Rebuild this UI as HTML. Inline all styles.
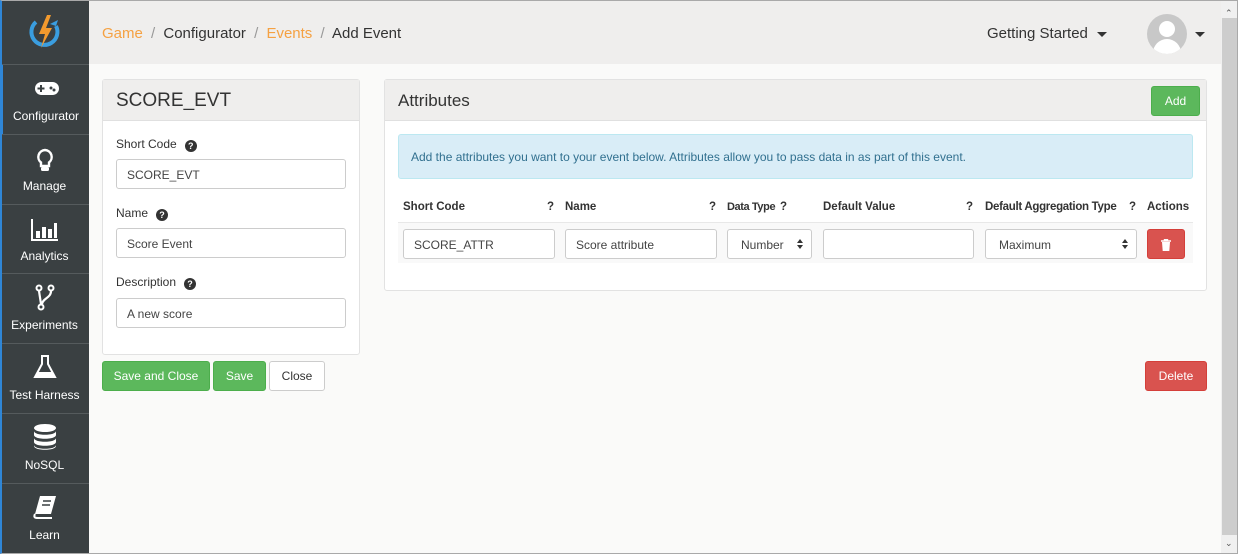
<!DOCTYPE html>
<html><head><style>
*{box-sizing:border-box;margin:0;padding:0}
body{width:1238px;height:554px;overflow:hidden;background:#fafaf9;font-family:"Liberation Sans",sans-serif;color:#333;position:relative;font-size:12px}
.a{position:absolute}
#win{position:absolute;left:0;top:0;width:1238px;height:554px;border:1px solid #a9a9a9;border-left:2px solid #2f86d6;pointer-events:none}
.side{left:0;top:0;width:89px;height:554px;background:#3a4042}
.item{position:absolute;left:0;width:89px;height:70px;border-top:1px solid #555b5d;color:#fff;text-align:center;font-size:12px}
.item span{position:absolute;left:0;right:0;top:44px}
.item svg{position:absolute;left:33px;top:12px}
.hdr{left:89px;top:0;width:1132px;height:64px;background:#efeeed}
.panel{background:#fff;border:1px solid #e2e2e2;border-radius:3px}
.ph{position:absolute;left:0;top:0;right:0;height:41px;background:#efeeed;border-bottom:1px solid #e0e0e0}
.inp{position:absolute;height:30px;border:1px solid #ccc;border-radius:3px;background:#fff;font-size:12px;padding:8px 10px;color:#444;white-space:nowrap}
.lbl{position:absolute;font-size:12px;color:#333}
.q{display:inline-block;width:12px;height:12px;border-radius:6px;background:#333;color:#fff;font-size:9px;font-weight:bold;text-align:center;line-height:12px;margin-left:8px;vertical-align:-1px}
.btn{position:absolute;height:30px;border-radius:3px;font-size:12px;text-align:center;line-height:29px;color:#fff}
.g{background:#5cb85c;border:1px solid #4cae4c}
.r{background:#d9534f;border:1px solid #d43f3a}
.th{position:absolute;top:201px;font-size:11.5px;font-weight:bold;color:#333;white-space:nowrap}
.sel:after{content:"";position:absolute;right:8px;top:9px;border:3px solid transparent;border-bottom:4px solid #333;border-top:0}
.sel:before{content:"";position:absolute;right:8px;top:15px;border:3px solid transparent;border-top:4px solid #333;border-bottom:0}
</style></head><body>
<div class="a side">
 <svg class="a" style="left:26px;top:12px" width="38" height="40" viewBox="0 0 38 40"><path d="M10 10 A13 13 0 1 0 30 14" fill="none" stroke="#3a9ee0" stroke-width="4"/><path d="M30 14 l-6 -2 l8 -4z" fill="#3a9ee0"/><path d="M21 3 L13 22 L19 22 L15 36 L26 16 L20 16 L25 3z" fill="#f29a2e"/></svg>
 <div class="item" style="top:64px;border-left:3px solid #2f86d6"><svg width="26" height="20" viewBox="0 0 26 20" style="left:31px;top:14px"><rect x="1" y="3" width="24" height="13" rx="6.5" fill="#fff"/><path d="M7 6v7M3.5 9.5h7" stroke="#3a4042" stroke-width="2"/><circle cx="17" cy="9" r="1.5" fill="#3a4042"/><circle cx="20" cy="11" r="1.5" fill="#3a4042"/></svg><span style="top:44px">Configurator</span></div>
 <div class="item" style="top:134px"><svg width="22" height="26" viewBox="0 0 22 26" style="left:34px"><path d="M11 3a7 7 0 0 0-4 12.5V19h8v-3.5A7 7 0 0 0 11 3z" fill="none" stroke="#fff" stroke-width="2.4"/><rect x="7" y="20" width="8" height="4" rx="1.5" fill="#fff"/></svg><span>Manage</span></div>
 <div class="item" style="top:204px"><svg width="30" height="26" viewBox="0 0 30 26" style="left:30px"><path d="M2 2v21h26" fill="none" stroke="#fff" stroke-width="2"/><rect x="6" y="14" width="4" height="7" fill="#fff"/><rect x="12" y="10" width="4" height="11" fill="#fff"/><rect x="18" y="12" width="4" height="9" fill="#fff"/><rect x="24" y="6" width="3" height="15" fill="#fff"/></svg><span>Analytics</span></div>
 <div class="item" style="top:273px"><svg width="22" height="28" viewBox="0 0 22 28" style="left:34px;top:10px"><circle cx="5" cy="4" r="2.5" fill="none" stroke="#fff" stroke-width="2"/><circle cx="17" cy="4" r="2.5" fill="none" stroke="#fff" stroke-width="2"/><circle cx="7" cy="23" r="2.5" fill="none" stroke="#fff" stroke-width="2"/><path d="M5 7l2 13M17 7c0 7-8 7-9 13" fill="none" stroke="#fff" stroke-width="2.2"/></svg><span>Experiments</span></div>
 <div class="item" style="top:343px"><svg width="24" height="26" viewBox="0 0 24 26" style="left:33px;top:10px"><path d="M8 2h8M9 2v8L2 23h20L15 10V2" fill="none" stroke="#fff" stroke-width="2"/><path d="M5 18h14l3 5H2z" fill="#fff"/></svg><span>Test Harness</span></div>
 <div class="item" style="top:413px"><svg width="26" height="28" viewBox="0 0 26 28" style="left:32px;top:9px"><ellipse cx="13" cy="5" rx="11" ry="4" fill="#fff"/><path d="M2 8c0 5 22 5 22 0v4c0 5-22 5-22 0zM2 15c0 5 22 5 22 0v4c0 5-22 5-22 0zM2 22c0 5 22 5 22 0v1c0 5-22 5-22 0z" fill="#fff"/></svg><span>NoSQL</span></div>
 <div class="item" style="top:483px"><svg width="26" height="26" viewBox="0 0 26 26" style="left:32px;top:10px"><path d="M8 2h16l-5 18H3z" fill="#fff"/><path d="M3 20c-2 4 1 4 3 4h14" fill="none" stroke="#fff" stroke-width="2"/><path d="M11 7h8M10 11h8" stroke="#3a4042" stroke-width="1.6"/></svg><span>Learn</span></div>
</div>
<div class="a hdr">
 <div class="a" style="left:13px;top:25px;font-size:15px;color:#333;white-space:nowrap"><span style="color:#f5a142">Game</span> <span style="color:#999;margin:0 4px">/</span> Configurator <span style="color:#999;margin:0 4px">/</span> <span style="color:#f5a142">Events</span> <span style="color:#999;margin:0 4px">/</span> Add Event</div>
 <div class="a" style="left:898px;top:25px;font-size:15px;color:#333">Getting Started</div>
 <div class="a" style="left:1008px;top:32px;border:5px solid transparent;border-top:5px solid #333;border-bottom:0"></div>
 <div class="a" style="left:1058px;top:14px;width:40px;height:40px;border-radius:20px;background:#c8c8c8;overflow:hidden"><div class="a" style="left:12px;top:7px;width:16px;height:16px;border-radius:8px;background:#fff"></div><div class="a" style="left:6px;top:25px;width:28px;height:22px;border-radius:14px 14px 0 0;background:#fff"></div></div>
 <div class="a" style="left:1106px;top:32px;border:5px solid transparent;border-top:5px solid #333;border-bottom:0"></div>
</div>
<div class="a panel" style="left:102px;top:79px;width:258px;height:276px">
 <div class="ph"><div class="a" style="left:13px;top:10px;font-size:19px;color:#333">SCORE_EVT</div></div>
 <div class="lbl" style="left:13px;top:57px">Short Code<span class="q">?</span></div>
 <div class="inp" style="left:13px;top:79px;width:230px">SCORE_EVT</div>
 <div class="lbl" style="left:13px;top:126px">Name<span class="q">?</span></div>
 <div class="inp" style="left:13px;top:148px;width:230px">Score Event</div>
 <div class="lbl" style="left:13px;top:195px">Description<span class="q">?</span></div>
 <div class="inp" style="left:13px;top:218px;width:230px">A new score</div>
</div>
<div class="btn g" style="left:102px;top:361px;width:108px">Save and Close</div>
<div class="btn g" style="left:213px;top:361px;width:53px">Save</div>
<div class="btn" style="left:269px;top:361px;width:56px;background:#fff;border:1px solid #ccc;color:#333">Close</div>
<div class="btn r" style="left:1145px;top:361px;width:62px">Delete</div>
<div class="a panel" style="left:384px;top:79px;width:823px;height:212px">
 <div class="ph"><div class="a" style="left:13px;top:11px;font-size:17px;color:#333">Attributes</div>
  <div class="btn g" style="left:766px;top:6px;width:49px;height:30px">Add</div></div>
 <div class="a" style="left:13px;top:54px;width:795px;height:45px;background:#d9edf7;border:1px solid #bce8f1;border-radius:3px;color:#31708f;font-size:12px;padding:15px 12px;white-space:nowrap">Add the attributes you want to your event below. Attributes allow you to pass data in as part of this event.</div>
 <div class="a" style="left:13px;top:142px;width:795px;height:1px;background:#e8e8e8"></div>
 <div class="a" style="left:13px;top:143px;width:795px;height:40px;background:#f9f9f9"></div>
</div>
<div class="a" style="left:384px;top:0;width:0;height:0">
 <div class="th" style="left:19px">Short Code</div><div class="th" style="left:163px">?</div>
 <div class="th" style="left:181px">Name</div><div class="th" style="left:325px">?</div>
 <div class="th" style="left:343px;letter-spacing:-0.4px;font-size:11px">Data Type</div><div class="th" style="left:396px">?</div>
 <div class="th" style="left:439px">Default Value</div><div class="th" style="left:582px">?</div>
 <div class="th" style="left:601px;letter-spacing:-0.3px">Default Aggregation Type</div><div class="th" style="left:745px">?</div>
 <div class="th" style="left:763px">Actions</div>
 <div class="inp" style="left:19px;top:229px;width:152px">SCORE_ATTR</div>
 <div class="inp" style="left:181px;top:229px;width:152px">Score attribute</div>
 <div class="inp sel" style="left:343px;top:229px;width:85px;padding-left:13px">Number</div>
 <div class="inp" style="left:439px;top:229px;width:151px"></div>
 <div class="inp sel" style="left:601px;top:229px;width:152px;padding-left:13px">Maximum</div>
 <div class="btn r" style="left:763px;top:229px;width:38px"><svg width="10" height="12" viewBox="0 0 10 12" style="margin-top:9px"><path d="M0 2h10M3.5 2V0.5h3V2" stroke="#fff" stroke-width="1.4" fill="none"/><path d="M1 3h8l-.7 9H1.7z" fill="#fff"/></svg></div>
</div>
<div class="a" style="left:1221px;top:0;width:16px;height:554px;background:#f0f0f0"><div class="a" style="left:1px;top:18px;width:15px;height:517px;background:#cdcdcd"></div><div class="a" style="left:4px;top:8px;font-size:9px;color:#555">&#8963;</div><div class="a" style="left:4px;top:538px;font-size:9px;color:#555">&#8964;</div></div>
<div id="win"></div>
</body></html>
